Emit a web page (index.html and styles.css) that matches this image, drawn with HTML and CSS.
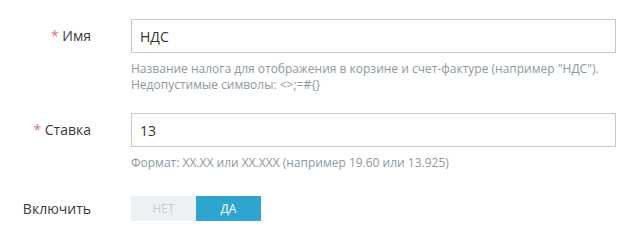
FILE: index.html
```html
<!DOCTYPE html>
<html lang="ru">
<head>
<meta charset="utf-8">
<link rel="stylesheet" href="styles.css">
</head>
<body>
<form class="form">
  <div class="row">
    <label class="label"><span class="req">*</span> Имя</label>
    <div class="field">
      <input class="input" type="text" value="НДС">
      <p class="help">Название налога для отображения в корзине и счет-фактуре (например "НДС").<br>Недопустимые символы: &lt;&gt;;=#{}</p>
    </div>
  </div>
  <div class="row row-rate">
    <label class="label"><span class="req">*</span> Ставка</label>
    <div class="field">
      <input class="input" type="text" value="13">
      <p class="help">Формат: XX.XX или XX.XXX (например 19.60 или 13.925)</p>
    </div>
  </div>
  <div class="row row-toggle">
    <label class="label label-toggle">Включить</label>
    <div class="field">
      <div class="toggle">
        <span class="opt opt-off">НЕТ</span>
        <span class="opt opt-on">ДА</span>
      </div>
    </div>
  </div>
</form>
</body>
</html>
```

FILE: styles.css
```css
* { box-sizing: border-box; }
html, body { margin: 0; padding: 0; background: #fff; }
body {
  font-family: "Open Sans", "Noto Sans", sans-serif;
  color: #333;
  width: 622px;
  height: 233px;
  overflow: hidden;
}
.form {
  padding: 19px 6px 0 0;
}
.row {
  display: grid;
  grid-template-columns: 91px 1fr;
  column-gap: 40px;
}
.row-rate { margin-top: 20px; }
.row-toggle { margin-top: 25px; }
.label {
  text-align: right;
  font-size: 14px;
  line-height: 34px;
  color: #3a3a3a;
  white-space: nowrap;
}
.label-toggle { line-height: 25px; }
.req { color: #d9737f; }
.field { min-width: 0; }
.input {
  display: block;
  width: 100%;
  height: 34px;
  margin: 0;
  padding: 0 8px;
  border: 1px solid #c8c8c8;
  border-radius: 0;
  font-family: "Open Sans", "Noto Sans", sans-serif;
  font-size: 14px;
  color: #333;
  background: #fff;
  outline: none;
}
.help {
  margin: 8px 0 0;
  font-size: 12px;
  line-height: 16px;
  color: #8c99a2;
}
.toggle {
  display: flex;
  width: 130px;
  height: 25px;
}
.opt {
  flex: 1;
  display: flex;
  align-items: center;
  justify-content: center;
  font-size: 12px;
  text-transform: uppercase;
}
.opt-off { background: #eef1f3; color: #c6cdd2; }
.opt-on { background: #2ea5cf; color: #fff; }
```
